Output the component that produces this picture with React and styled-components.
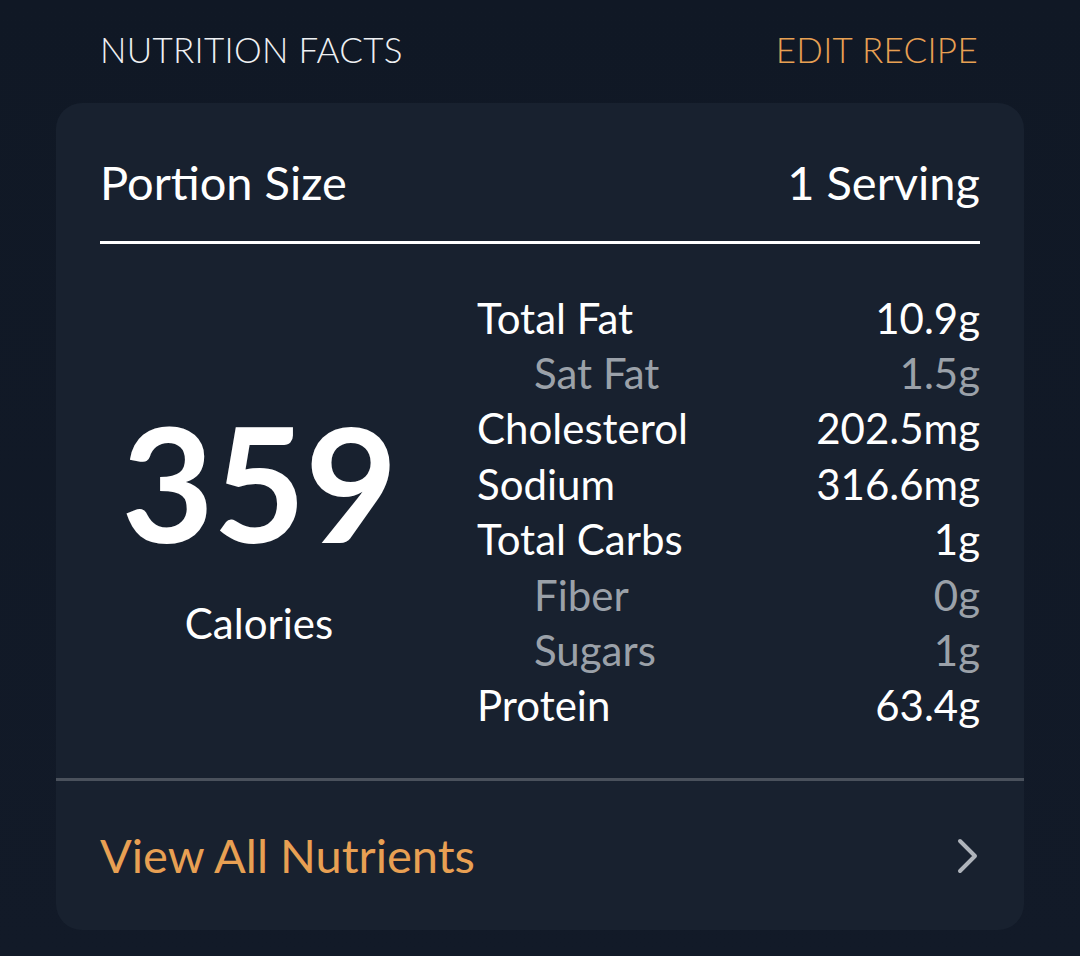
import React from "react"
import styled, { createGlobalStyle } from "styled-components"

const Global = createGlobalStyle`
  html, body {
    margin: 0;
    padding: 0;
    background: #111927;
  }
  body {
    font-family: Lato, "Open Sans", "Liberation Sans", sans-serif;
    font-weight: 400;
    -webkit-font-smoothing: antialiased;
  }
`

const Page = styled.div`
  width: 1080px;
  height: 956px;
  background: linear-gradient(180deg, #101825 0%, #121a28 100%);
  overflow: hidden;
`
const Header = styled.div`
  display: flex;
  justify-content: space-between;
  align-items: center;
  height: 98px;
  padding: 0 102px 0 100px;
  box-sizing: border-box;
  font-size: 35px;
  font-weight: 300;
  letter-spacing: 0.3px;
`
const HeaderTitle = styled.span`
  color: #eef0f3;
`
const HeaderLink = styled.span`
  color: #e8a053;
`
const Card = styled.div`
  margin: 5px 56px 0;
  background: #18212f;
  border-radius: 26px;
  padding: 0 44px;
`
const PortionRow = styled.div`
  display: flex;
  justify-content: space-between;
  align-items: center;
  height: 141px;
  padding-top: 19px;
  box-sizing: border-box;
  font-size: 47px;
  color: #ffffff;
  border-bottom: 3px solid #ffffff;
`
const Body = styled.div`
  display: grid;
  grid-template-columns: 318px 1fr;
  column-gap: 59px;
  align-items: center;
  padding: 46px 0 45px;
`
const CaloriesBox = styled.div`
  display: flex;
  flex-direction: column;
  align-items: center;
  color: #ffffff;
  padding-top: 30px;
`
const CalorieNumber = styled.div`
  font-size: 160px;
  font-weight: 700;
  line-height: 150px;
  letter-spacing: -1px;
`
const CalorieLabel = styled.div`
  font-size: 42px;
  margin-top: 42px;
`
const List = styled.div`
  display: flex;
  flex-direction: column;
`
const Row = styled.div`
  display: flex;
  justify-content: space-between;
  align-items: center;
  height: 55.4px;
  font-size: 42px;
  color: ${p => (p.sub ? "#9ba1a9" : "#ffffff")};
  padding-left: ${p => (p.sub ? "57px" : "0")};
`
const Footer = styled.div`
  margin: 0 -44px;
  padding: 0 44px;
  height: 152px;
  display: flex;
  justify-content: space-between;
  align-items: center;
  border-top: 3px solid #4a515c;
  box-sizing: border-box;
`
const FooterLink = styled.span`
  font-size: 47px;
  color: #e8a053;
  padding-bottom: 2px;
`

const nutrients = [
  { name: "Total Fat", value: "10.9g" },
  { name: "Sat Fat", value: "1.5g", sub: true },
  { name: "Cholesterol", value: "202.5mg" },
  { name: "Sodium", value: "316.6mg" },
  { name: "Total Carbs", value: "1g" },
  { name: "Fiber", value: "0g", sub: true },
  { name: "Sugars", value: "1g", sub: true },
  { name: "Protein", value: "63.4g" },
]

export default function App() {
  return (
    <Page>
      <Global />
      <Header>
        <HeaderTitle>NUTRITION FACTS</HeaderTitle>
        <HeaderLink>EDIT RECIPE</HeaderLink>
      </Header>
      <Card>
        <PortionRow>
          <span>Portion Size</span>
          <span>1 Serving</span>
        </PortionRow>
        <Body>
          <CaloriesBox>
            <CalorieNumber>359</CalorieNumber>
            <CalorieLabel>Calories</CalorieLabel>
          </CaloriesBox>
          <List>
            {nutrients.map(n => (
              <Row key={n.name} sub={n.sub}>
                <span>{n.name}</span>
                <span>{n.value}</span>
              </Row>
            ))}
          </List>
        </Body>
        <Footer>
          <FooterLink>View All Nutrients</FooterLink>
          <svg width="24" height="38" viewBox="0 0 24 38">
            <path
              d="M4 4 L19 19 L4 34"
              fill="none"
              stroke="#aeb3ba"
              strokeWidth="4"
              strokeLinecap="round"
              strokeLinejoin="round"
            />
          </svg>
        </Footer>
      </Card>
    </Page>
  )
}
